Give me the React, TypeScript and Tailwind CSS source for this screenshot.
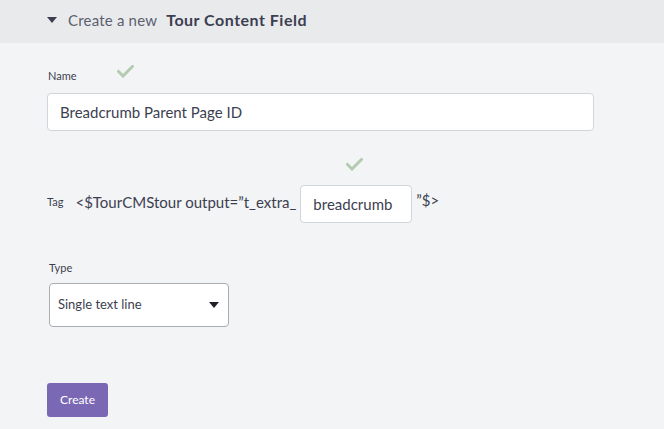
import React from "react";

const Check = ({ className }: { className?: string }) => (
  <svg className={className} width="17" height="13" viewBox="0 0 17 13" fill="none">
    <path d="M1.5 6.5 L6 11 L15.5 1.5" stroke="#b3ccb0" strokeWidth="3" strokeLinecap="square" />
  </svg>
);

export default function App() {
  return (
    <div className="w-[664px] h-[429px] bg-[#f3f4f6] text-[#3c3f50] overflow-hidden" style={{ fontFamily: "Lato, 'Open Sans', sans-serif" }}>
      <div className="h-[43px] bg-[#e9eaec] flex items-center pl-[47px]">
        <svg width="10" height="6" viewBox="0 0 10 6" className="mr-[11px] mt-[-3px]">
          <path d="M0 0 L10 0 L5 6 Z" fill="#3c3f50" />
        </svg>
        <span className="text-[15px] text-[#5b5f6f] mr-[9px] mt-[-3px] tracking-[0.2px]">Create a new</span>
        <span className="text-[16px] font-bold text-[#3c3f50] mt-[-3px] tracking-[0.5px]">Tour Content Field</span>
      </div>

      <div className="pl-[47px]">
        <div className="flex items-end h-[37px] pt-[24px]">
          <span className="text-[11px] ml-[1px] leading-none mb-[-1px]">Name</span>
          <Check className="ml-[40px] mb-[2px]" />
        </div>
        <div className="mt-[13px] w-[547px] h-[38px] bg-white border border-[#d2d5da] rounded-[4px] flex items-center pl-[12px] text-[15px] text-[#3c3f50]">
          Breadcrumb Parent Page ID
        </div>

        <div className="h-[40px] flex items-end pl-[299px]">
          <Check />
        </div>

        <div className="mt-[14px] flex items-center">
          <span className="text-[11px] mt-[-4px]">Tag</span>
          <span className="text-[15px] ml-[12px] mt-[-4px]">&lt;$TourCMStour output=”t_extra_</span>
          <div className="ml-[4px] w-[112px] h-[38px] bg-white border border-[#d2d5da] rounded-[4px] flex items-center pl-[12px] text-[15px]">
            breadcrumb
          </div>
          <span className="text-[15px] ml-[4px] mt-[-8px]">”$&gt;</span>
        </div>

        <div className="mt-[39px] text-[11px] ml-[2px] leading-none">Type</div>
        <div className="mt-[10px] ml-[2px] w-[180px] h-[44px] bg-white border border-[#a9acb3] rounded-[4px] flex items-center justify-between pl-[8px] pr-[9px]">
          <span className="text-[13px]">Single text line</span>
          <svg width="10" height="6" viewBox="0 0 10 6">
            <path d="M0 0 L10 0 L5 6 Z" fill="#1f2128" />
          </svg>
        </div>

        <button className="mt-[56px] w-[61px] h-[34px] bg-[#7b68b5] rounded-[3px] text-white text-[12px]">
          Create
        </button>
      </div>
    </div>
  );
}
